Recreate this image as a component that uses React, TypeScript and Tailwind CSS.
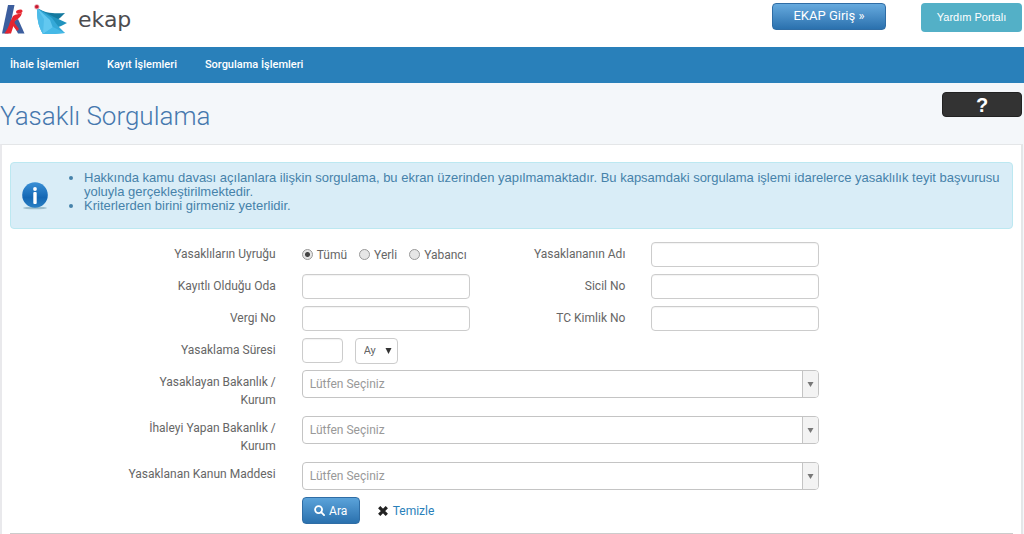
import type { ReactNode } from 'react';

const fieldClass =
  'block h-[25px] w-full rounded border border-[#ccc] bg-white px-2 text-[#555] shadow-[inset_0_1px_1px_rgba(0,0,0,0.05)]';

const gridClass =
  'grid grid-cols-[minmax(0,266fr)_minmax(0,168fr)_minmax(0,130fr)_minmax(0,168fr)_minmax(0,168fr)] items-start gap-x-[26px] gap-y-[7px]';

function Label({ htmlFor, children }: { htmlFor: string; children: ReactNode }) {
  return (
    <label htmlFor={htmlFor} className="ml-auto block max-w-[150px] pt-[3px] text-right leading-[18px]">
      {children}
    </label>
  );
}

function Radio({ label, checked = false }: { label: string; checked?: boolean }) {
  return (
    <label className="flex items-center gap-1">
      <input
        type="radio"
        name="uyruk"
        defaultChecked={checked}
        className="size-[11px] appearance-none rounded-full border border-[#999] bg-[#e6e6e6] checked:bg-[radial-gradient(circle,#444_0_2px,#e6e6e6_3px)]"
      />
      {label}
    </label>
  );
}

function WideSelect({ id }: { id: string }) {
  return (
    <div className="col-span-3 grid h-7 overflow-hidden rounded border border-[#c4c4c4] bg-white">
      <select
        id={id}
        className="col-start-1 row-start-1 h-full w-full appearance-none bg-transparent px-[7px] text-[#999]"
      >
        <option>Lütfen Seçiniz</option>
      </select>
      <span className="pointer-events-none col-start-1 row-start-1 flex w-4 items-center justify-center justify-self-end border-l border-[#c4c4c4] bg-[#f3f3f3]">
        <svg width="7" height="5" viewBox="0 0 7 5" aria-hidden="true">
          <path d="M0.5 0h6L3.5 5z" fill="#777" />
        </svg>
      </span>
    </div>
  );
}

function KikLogo() {
  return (
    <svg width="25" height="32" viewBox="0 0 25 32" aria-hidden="true">
      <path d="M7 1H13.5L7.5 29.5H1Z" fill="#3c5e9e" />
      <path d="M13 17L17 15L23.5 29.5H17L12 20Z" fill="#3c5e9e" />
      <path d="M12 12C15 10 18 10 21 9C20 13 17 15 14 17L10 29.5H3.5C6 26 8 22 9 18Z" fill="#e5252f" />
      <ellipse cx="18.3" cy="7.6" rx="3.3" ry="1.9" fill="#e5252f" transform="rotate(-15 18.3 7.6)" />
      <path d="M12 17L18 25L16 27L10.5 20Z" fill="#e5252f" />
    </svg>
  );
}

function BirdLogo() {
  return (
    <svg width="36" height="33" viewBox="0 0 36 33" aria-hidden="true">
      <path d="M3 4C11 9 20 10 31 9C28 12 25 15 22 17Z" fill="#14799f" />
      <path d="M3 4L20 13L33 19C29 21 25 23 22 24Z" fill="#2193be" />
      <path d="M3 4L18 14L24 22L31 29C23 30 16 30 9 30C4 22 3 13 3 4Z" fill="#35a9d8" />
      <path d="M3 4L16 16L19 24L9 30C4 22 3 13 3 4Z" fill="#62c8f0" />
      <path d="M3 4L10 15L9 30C4 22 3 13 3 4Z" fill="#4dbbe8" />
      <path d="M9 30L19 23L31 29C23 30 16 30 9 30Z" fill="#45b9e7" />
      <circle cx="2.8" cy="2.8" r="2.6" fill="#e8a0ab" />
      <circle cx="2.8" cy="2.8" r="1.8" fill="#c9182f" />
    </svg>
  );
}

function InfoIcon() {
  return (
    <svg className="shrink-0" width="28" height="28" viewBox="0 0 28 28" aria-hidden="true">
      <defs>
        <linearGradient id="info" x1="0" y1="0" x2="0" y2="1">
          <stop offset="0" stopColor="#3a90d6" />
          <stop offset="0.6" stopColor="#1467b4" />
          <stop offset="1" stopColor="#2a80c4" />
        </linearGradient>
      </defs>
      <ellipse cx="14" cy="26" rx="12" ry="1.3" fill="#9dbdcb" />
      <circle cx="14" cy="13" r="12.8" fill="url(#info)" />
      <circle cx="14" cy="7" r="1.9" fill="#fff" />
      <rect x="12.3" y="10" width="3.4" height="12" rx="1" fill="#fff" />
    </svg>
  );
}

export default function App() {
  return (
    <div className="min-h-screen bg-[#f4f7fa] font-['Roboto',Arial,sans-serif] text-[12px] text-[#666]">
      <header className="flex h-[47px] items-start bg-white pr-[2px]">
        <a href="#" className="flex items-start gap-2 pt-1 pl-px" aria-label="ekap">
          <KikLogo />
          <BirdLogo />
          <span className="font-['DejaVu_Sans',sans-serif] text-[22px] leading-[32px] text-[#4c4c50]">ekap</span>
        </a>
        <div className="ml-auto flex items-start gap-[35px] pt-[3px]">
          <button
            type="button"
            className="h-[27px] w-[114px] rounded border border-[#2f6da5] bg-linear-to-b from-[#66aade] to-[#2a71ae] pb-[2px] text-[13px] text-white"
          >
            EKAP Giriş »
          </button>
          <button type="button" className="h-[29px] w-[101px] rounded bg-[#53b0c7] font-['Liberation_Sans',Arial,sans-serif] text-[11px] text-white">
            Yardım Portalı
          </button>
        </div>
      </header>

      <nav className="flex h-9 items-center gap-7 bg-[#2980ba] px-[10px] text-[11px] font-medium text-white">
        <a href="#">İhale İşlemleri</a>
        <a href="#">Kayıt İşlemleri</a>
        <a href="#">Sorgulama İşlemleri</a>
      </nav>

      <div className="flex items-start justify-between pt-[9px] pr-[2px] pb-3">
        <h1 className="pt-2 text-[26px] leading-[32px] font-light text-[#4678ae]">
          Yasaklı Sorgulama
        </h1>
        <button
          type="button"
          aria-label="Yardım"
          className="h-[25px] w-[80px] rounded border border-[#222] bg-[#333] font-['Liberation_Sans',Arial,sans-serif] text-[20px] leading-[22px] font-bold text-white"
        >
          ?
        </button>
      </div>

      <main className="mr-px border-2 border-t border-[#e4e6e8] border-l-[#e9e9ec] bg-white px-2 pt-[17px]">
        <section className="flex min-h-[67px] items-center rounded border border-[#bce8f1] bg-[#d9edf7] pl-[10px] font-['Liberation_Sans',Arial,sans-serif] text-[#4682aa]">
          <InfoIcon />
          <ul className="mb-[7px] ml-[35px] list-disc text-[13px] leading-[14px]">
            <li>
              Hakkında kamu davası açılanlara ilişkin sorgulama, bu ekran üzerinden yapılmamaktadır. Bu kapsamdaki
              sorgulama işlemi idarelerce yasaklılık teyit başvurusu yoluyla gerçekleştirilmektedir.
            </li>
            <li>Kriterlerden birini girmeniz yeterlidir.</li>
          </ul>
        </section>

        <form className="pt-[13px]">
          <div className={gridClass}>
            <span className="pt-[3px] text-right leading-[18px]">Yasaklıların Uyruğu</span>
            <div className="flex h-[25px] items-center gap-3 whitespace-nowrap" role="radiogroup" aria-label="Yasaklıların Uyruğu">
              <Radio label="Tümü" checked />
              <Radio label="Yerli" />
              <Radio label="Yabancı" />
            </div>
            <Label htmlFor="ad">Yasaklananın Adı</Label>
            <input id="ad" type="text" className={fieldClass} />
            <span />

            <Label htmlFor="oda">Kayıtlı Olduğu Oda</Label>
            <input id="oda" type="text" className={fieldClass} />
            <Label htmlFor="sicil">Sicil No</Label>
            <input id="sicil" type="text" className={fieldClass} />
            <span />

            <Label htmlFor="vergi">Vergi No</Label>
            <input id="vergi" type="text" className={fieldClass} />
            <Label htmlFor="tc">TC Kimlik No</Label>
            <input id="tc" type="text" className={fieldClass} />
            <span />

            <Label htmlFor="sure">Yasaklama Süresi</Label>
            <div className="col-span-4 flex h-[25px] items-center gap-3">
              <div className="w-[41px]">
                <input id="sure" type="text" className={fieldClass} />
              </div>
              <div className="grid w-[43px] items-center">
                <select
                  aria-label="Süre birimi"
                  className="col-start-1 row-start-1 h-[26px] w-full appearance-none rounded border border-[#ccc] bg-white pt-[2px] pl-2 text-[11px]"
                >
                  <option>Ay</option>
                </select>
                <svg
                  className="pointer-events-none col-start-1 row-start-1 mr-[6px] justify-self-end"
                  width="7"
                  height="6"
                  viewBox="0 0 7 6"
                  aria-hidden="true"
                >
                  <path d="M0.5 0h6L3.5 6z" fill="#333" />
                </svg>
              </div>
            </div>

            <Label htmlFor="yasaklayan">Yasaklayan Bakanlık / Kurum</Label>
            <WideSelect id="yasaklayan" />
            <span />

            <Label htmlFor="ihale">İhaleyi Yapan Bakanlık / Kurum</Label>
            <WideSelect id="ihale" />
            <span />

            <Label htmlFor="madde">Yasaklanan Kanun Maddesi</Label>
            <WideSelect id="madde" />
            <span />

            <div className="col-span-4 col-start-2 flex items-center gap-[18px]">
              <button
                type="submit"
                className="flex h-[27px] w-[58px] items-center justify-center gap-1 rounded border border-[#2f6da5] bg-linear-to-b from-[#5ba3da] to-[#2a71ae] text-white"
              >
                <svg width="11" height="11" viewBox="0 0 12 12" fill="none" stroke="#fff" strokeWidth="2" aria-hidden="true">
                  <circle cx="5" cy="5" r="3.8" />
                  <path d="M7.8 7.8L11 11" strokeLinecap="round" />
                </svg>
                Ara
              </button>
              <button type="reset" className="flex items-center gap-[5px] text-[#2980ba]">
                <svg width="10" height="10" viewBox="0 0 10 10" stroke="#222" strokeWidth="3.2" aria-hidden="true">
                  <path d="M1.2 1.2L8.8 8.8M8.8 1.2L1.2 8.8" />
                </svg>
                Temizle
              </button>
            </div>
          </div>
          <hr className="mt-[9px] border-[#ccc]" />
        </form>
      </main>
    </div>
  );
}
